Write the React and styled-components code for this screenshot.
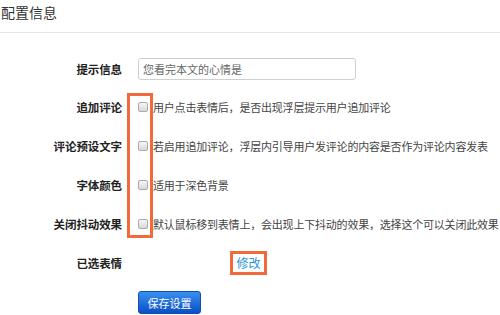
import React from "react";
import styled, { createGlobalStyle } from "styled-components";

const GlobalStyle = createGlobalStyle`
  html, body {
    margin: 0;
    padding: 0;
    background: #ffffff;
  }
  body {
    font-family: "Liberation Sans", "Noto Sans CJK SC", sans-serif;
    color: #333;
  }
`;

const Page = styled.div`
  width: 500px;
  height: 315px;
  overflow: hidden;
  background: #fff;
`;

const Header = styled.div`
  height: 32px;
  border-bottom: 1px solid #e6e6e6;
  padding-left: 1px;
  display: flex;
  align-items: flex-start;
`;

const Title = styled.h2`
  margin: 3px 0 0;
  font-size: 14px;
  font-weight: normal;
  line-height: 18px;
  color: #333;
  font-family: "Noto Sans CJK SC", sans-serif;
`;

const Form = styled.div`
  position: relative;
  padding-top: 17px;
`;

const Row = styled.div`
  display: flex;
  align-items: center;
  height: ${(p) => p.h || "38.8px"};
`;

const Label = styled.div`
  width: 122px;
  flex-shrink: 0;
  text-align: right;
  font-family: "Noto Sans CJK SC", sans-serif;
  font-size: 11.5px;
  font-weight: bold;
  color: #222;
  letter-spacing: -0.1px;
`;

const Field = styled.div`
  display: flex;
  align-items: center;
  margin-left: ${(p) => p.ml || "16px"};
`;

const TextInput = styled.input`
  width: 218px;
  height: 22px;
  box-sizing: border-box;
  border: 1px solid #cfcfcf;
  border-radius: 3px;
  padding: 0 4px;
  font-family: "Noto Sans CJK SC", sans-serif;
  font-size: 11px;
  color: #555;
  outline: none;
  &::placeholder {
    color: #666;
  }
`;

const Check = styled.input`
  appearance: none;
  margin: 0;
  width: 10px;
  height: 10px;
  border: 1px solid #aaa;
  border-radius: 2px;
  background: linear-gradient(#f6f6f6, #d9d9d9);
  box-sizing: border-box;
  flex-shrink: 0;
`;

const Hint = styled.span`
  margin-left: 5px;
  font-family: "Noto Sans CJK SC", sans-serif;
  font-size: 11px;
  color: #444;
  white-space: nowrap;
  letter-spacing: -0.2px;
`;

const Highlight = styled.div`
  position: absolute;
  left: 127px;
  top: 60px;
  width: 26px;
  height: 145px;
  box-sizing: border-box;
  border: 3px solid #f26a3a;
  pointer-events: none;
`;

const EditLink = styled.a`
  display: flex;
  align-items: center;
  justify-content: center;
  width: 37px;
  height: 24px;
  box-sizing: border-box;
  border: 3px solid #f26a3a;
  font-family: "Noto Sans CJK SC", sans-serif;
  font-size: 12px;
  color: #2e95d8;
  text-decoration: none;
`;

const SaveButton = styled.button`
  width: 63px;
  height: 23px;
  border: 1px solid #0d4fb8;
  border-radius: 3px;
  background: linear-gradient(#3a8ff0, #0a4fc4);
  color: #fff;
  font-family: "Noto Sans CJK SC", sans-serif;
  font-size: 11px;
  padding: 0;
`;

const options = [
  { label: "追加评论", hint: "用户点击表情后，是否出现浮层提示用户追加评论" },
  {
    label: "评论预设文字",
    hint: "若启用追加评论，浮层内引导用户发评论的内容是否作为评论内容发表",
  },
  { label: "字体颜色", hint: "适用于深色背景" },
  {
    label: "关闭抖动效果",
    hint: "默认鼠标移到表情上，会出现上下抖动的效果，选择这个可以关闭此效果",
  },
];

export default function App() {
  return (
    <Page>
      <GlobalStyle />
      <Header>
        <Title>配置信息</Title>
      </Header>
      <Form>
        <Row h="38px">
          <Label>提示信息</Label>
          <Field>
            <TextInput placeholder="您看完本文的心情是" />
          </Field>
        </Row>
        {options.map((o) => (
          <Row key={o.label}>
            <Label>{o.label}</Label>
            <Field>
              <Check type="checkbox" />
              <Hint>{o.hint}</Hint>
            </Field>
          </Row>
        ))}
        <Row>
          <Label>已选表情</Label>
          <Field ml="108px">
            <EditLink href="#">修改</EditLink>
          </Field>
        </Row>
        <Row h="42px">
          <Label />
          <Field>
            <SaveButton>保存设置</SaveButton>
          </Field>
        </Row>
        <Highlight />
      </Form>
    </Page>
  );
}
